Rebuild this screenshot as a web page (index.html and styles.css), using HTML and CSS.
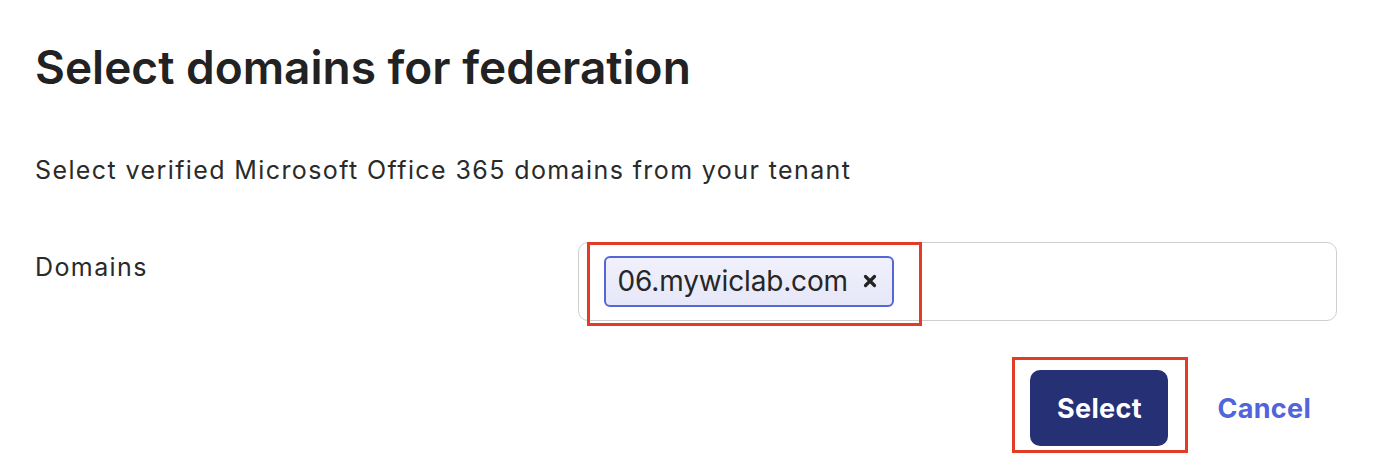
FILE: index.html
```html
<!DOCTYPE html>
<html lang="en">
<head>
<meta charset="utf-8">
<title>Select domains for federation</title>
<link rel="stylesheet" href="styles.css">
</head>
<body>
<div class="dialog">
  <h1 class="title">Select domains for federation</h1>
  <p class="desc">Select verified Microsoft Office 365 domains from your tenant</p>
  <div class="field">
    <label class="label">Domains</label>
    <div class="input">
      <span class="chip">
        <span class="chip-text">06.mywiclab.com</span>
        <svg class="chip-x" width="14" height="14" viewBox="0 0 14 14" aria-hidden="true"><path d="M2.5 2.5 L11.5 11.5 M11.5 2.5 L2.5 11.5" stroke="#222" stroke-width="3.2" stroke-linecap="round" fill="none"/></svg>
        <span class="mark mark-chip"></span>
      </span>
    </div>
  </div>
  <div class="actions">
    <div class="btn-wrap">
      <button class="btn-primary">Select</button>
      <span class="mark mark-btn"></span>
    </div>
    <button class="btn-link">Cancel</button>
  </div>
</div>
</body>
</html>
```

FILE: styles.css
```css
html, body {
  margin: 0;
  padding: 0;
  background: #ffffff;
}
body {
  min-height: 470px;
  font-family: Inter, "Noto Sans", sans-serif;
  color: #262626;
}
.dialog {
  padding: 39px 45px 24px 35px;
}
.title {
  margin: 0;
  font-size: 46px;
  line-height: 56px;
  font-weight: 600;
  color: #222222;
  letter-spacing: 0;
}
.desc {
  margin: 60px 0 0 0;
  font-size: 25px;
  line-height: 30px;
  letter-spacing: 1.4px;
  color: #2a2a2a;
}
.field {
  display: flex;
  align-items: flex-start;
  margin-top: 57px;
}
.label {
  width: 543px;
  flex: none;
  font-size: 25px;
  line-height: 30px;
  letter-spacing: 1.4px;
  padding-top: 10px;
  color: #2a2a2a;
}
.input {
  flex: 1;
  display: flex;
  align-items: flex-start;
  height: 79px;
  box-sizing: border-box;
  border: 1.5px solid #cfcfcf;
  border-radius: 10px;
  padding: 12.5px 0 0 24.5px;
}
.chip {
  position: relative;
  display: flex;
  align-items: center;
  height: 51px;
  box-sizing: border-box;
  border: 2px solid #5566d6;
  border-radius: 6px;
  background: linear-gradient(#f1f1fc, #e6e7f8);
  padding: 0 15px 0 12px;
}
.chip-text {
  font-size: 28px;
  letter-spacing: -0.15px;
  color: #262626;
}
.chip-x {
  display: block;
  margin-left: 15px;
}
.mark {
  position: absolute;
  border: 3px solid #e23b26;
  pointer-events: none;
}
.mark-chip {
  left: -19px;
  top: -16px;
  right: -30px;
  bottom: -21px;
}
.actions {
  display: flex;
  justify-content: flex-end;
  align-items: center;
  margin-top: 49px;
  padding-right: 26px;
}
.btn-wrap {
  position: relative;
  display: flex;
}
.btn-primary {
  width: 138px;
  height: 76px;
  border: none;
  border-radius: 10px;
  background: #263074;
  color: #ffffff;
  font-family: Inter, "Noto Sans", sans-serif;
  font-size: 27px;
  letter-spacing: 0.3px;
  font-weight: 700;
  padding: 0;
}
.mark-btn {
  left: -18px;
  top: -13px;
  right: -20px;
  bottom: -7px;
}
.btn-link {
  margin-left: 49px;
  border: none;
  background: none;
  padding: 0;
  color: #5064dc;
  font-family: Inter, "Noto Sans", sans-serif;
  font-size: 27px;
  letter-spacing: 0.3px;
  font-weight: 700;
}
```
